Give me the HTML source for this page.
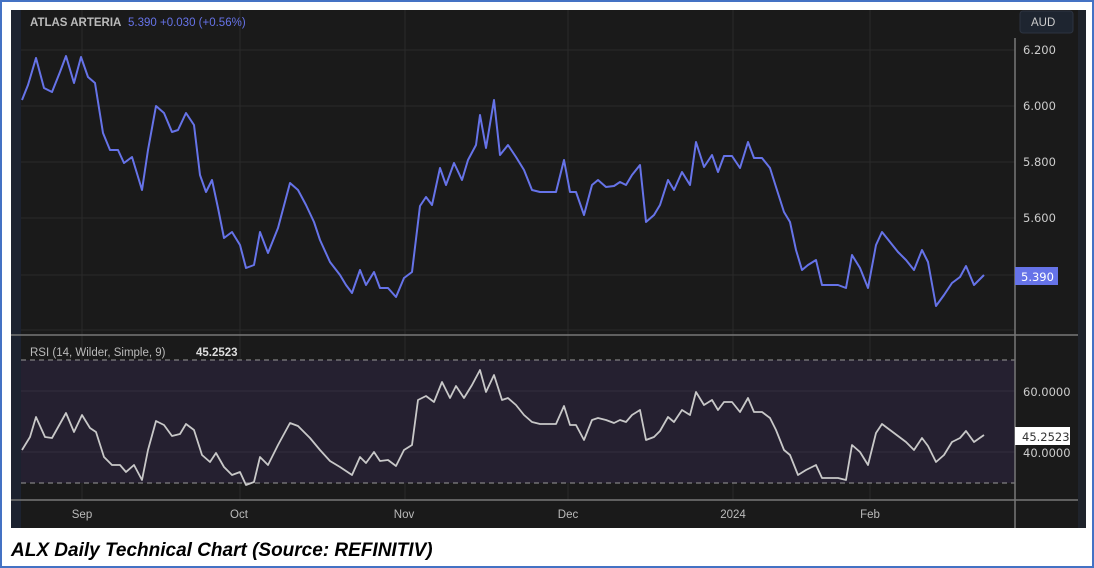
<!DOCTYPE html>
<html><head><style>
body{margin:0;width:1094px;height:568px;background:#fff;overflow:hidden;font-family:"Liberation Sans",sans-serif}
.frame{position:absolute;left:0;top:0;width:1090px;height:564px;border:2px solid #4472c4}
</style></head><body>
<div class="frame"></div>
<svg width="1094" height="568" style="position:absolute;left:0;top:0" font-family="Liberation Sans, sans-serif">
<rect x="11" y="10" width="1075" height="518" fill="#1a1a1a"/>
<rect x="11" y="10" width="10" height="518" fill="#1c2230"/>
<rect x="1078" y="10" width="8" height="518" fill="#1f232b"/>
<g stroke="#2a2a2a" stroke-width="1">
<line x1="21" y1="50" x2="1015" y2="50"/><line x1="21" y1="106" x2="1015" y2="106"/><line x1="21" y1="162" x2="1015" y2="162"/><line x1="21" y1="218" x2="1015" y2="218"/><line x1="21" y1="275" x2="1015" y2="275"/><line x1="21" y1="330" x2="1015" y2="330"/>
<line x1="82" y1="10" x2="82" y2="500"/><line x1="240" y1="10" x2="240" y2="500"/><line x1="405" y1="10" x2="405" y2="500"/><line x1="568" y1="10" x2="568" y2="500"/><line x1="733" y1="10" x2="733" y2="500"/><line x1="870" y1="10" x2="870" y2="500"/>
</g>
<rect x="21" y="360" width="994" height="123" fill="#252030"/>
<g stroke="#332e3e"><line x1="21" y1="391" x2="1015" y2="391"/><line x1="21" y1="452" x2="1015" y2="452"/></g>
<g stroke="#999" stroke-dasharray="5,4"><line x1="21" y1="360" x2="1015" y2="360"/><line x1="21" y1="483" x2="1015" y2="483"/></g>
<line x1="11" y1="335" x2="1078" y2="335" stroke="#777" stroke-width="1.5"/>
<line x1="11" y1="500" x2="1078" y2="500" stroke="#777" stroke-width="1.5"/>
<line x1="1015" y1="38" x2="1015" y2="528" stroke="#777" stroke-width="1.5"/>
<polyline fill="none" stroke="#6673e8" stroke-width="2" stroke-linejoin="round" points="22,100 28,85 36,58 44,88 52,92 60,72 66,56 74,83 81,57 88,77 95,83 103,133 110,150 118,150 124,163 132,157 142,190 148,150 156,106 164,113 172,132 178,130 186,113 194,125 200,175 206,192 212,180 218,208 224,238 232,232 240,245 246,268 254,265 260,232 268,253 278,228 290,183 298,190 306,205 314,222 320,240 330,262 340,275 346,285 352,293 360,270 366,285 374,272 380,288 388,288 396,297 404,278 412,272 420,206 426,197 432,205 440,168 446,185 454,163 462,180 468,160 476,145 480,115 486,148 494,100 500,155 508,145 516,157 524,170 532,190 540,192 548,192 556,192 564,160 570,192 576,192 584,215 592,185 598,180 606,187 614,186 620,182 626,185 632,175 640,165 646,222 654,215 660,205 668,180 674,190 682,172 690,185 696,142 704,167 712,155 718,172 724,156 732,156 740,168 748,142 754,158 762,158 770,168 776,187 784,212 790,222 796,250 802,270 808,265 816,260 822,285 830,285 838,285 846,288 852,255 860,268 868,288 876,245 882,232 890,242 898,252 906,260 914,270 922,250 928,262 936,306 944,295 952,283 960,277 966,266 974,285 984,275"/>
<polyline fill="none" stroke="#c8c8c8" stroke-width="1.8" stroke-linejoin="round" points="22,450 30,437 36,417 45,437 52,438 66,413 74,432 82,415 90,428 96,432 104,457 112,465 120,465 126,472 134,465 142,480 148,450 156,421 164,425 172,436 180,434 186,424 194,430 202,455 210,462 216,453 224,467 232,475 240,472 246,485 254,482 260,457 268,465 278,445 290,423 298,426 310,438 320,450 330,461 340,467 352,475 360,457 366,463 374,452 380,461 388,460 396,466 404,450 412,445 418,400 426,396 434,402 442,382 450,398 456,386 464,398 472,385 480,370 486,392 494,375 502,400 508,398 516,405 524,415 532,422 540,424 548,424 556,424 564,406 570,425 576,425 584,440 592,420 598,418 606,420 614,423 620,420 626,422 632,415 640,410 646,440 654,437 660,431 668,417 674,422 682,410 690,415 696,392 704,405 712,400 718,410 724,402 732,402 740,412 748,398 754,412 762,412 770,418 776,430 784,450 790,455 798,475 806,470 816,465 822,478 830,478 838,478 846,480 852,445 860,452 868,465 876,433 882,424 890,430 898,436 906,442 914,450 922,438 928,446 936,462 944,455 952,442 960,438 966,431 974,442 984,435"/>
<text x="30" y="26" font-size="11.5" fill="#bbb" font-weight="bold">ATLAS ARTERIA</text>
<text x="128" y="26" font-size="11.5" fill="#6673e8">5.390  +0.030 (+0.56%)</text>
<rect x="1020" y="11" width="53" height="22" rx="3" fill="#1e2530" stroke="#2c3340"/>
<text x="1031" y="26" font-size="11.5" fill="#ccc">AUD</text>
<g font-size="11.5" fill="#ccc" font-family="DejaVu Sans, sans-serif">
<text x="1023" y="54">6.200</text><text x="1023" y="110">6.000</text><text x="1023" y="166">5.800</text><text x="1023" y="222">5.600</text>
<text x="1023" y="396">60.0000</text><text x="1023" y="457">40.0000</text>
</g>
<rect x="1015" y="267" width="43" height="18" fill="#6673e8"/>
<text x="1021" y="281" font-size="11.5" fill="#fff" font-family="DejaVu Sans, sans-serif">5.390</text>
<rect x="1015" y="427" width="55" height="18" fill="#fff"/>
<text x="1022" y="441" font-size="11.5" fill="#333" font-family="DejaVu Sans, sans-serif">45.2523</text>
<text x="30" y="356" font-size="11.5" fill="#bbb">RSI (14, Wilder, Simple, 9)</text>
<text x="196" y="356" font-size="11.5" fill="#ddd" font-weight="bold">45.2523</text>
<g font-size="11.5" fill="#bbb" text-anchor="middle">
<text x="82" y="518">Sep</text><text x="239" y="518">Oct</text><text x="404" y="518">Nov</text><text x="568" y="518">Dec</text><text x="733" y="518">2024</text><text x="870" y="518">Feb</text>
</g>
<text x="11" y="556" font-size="19" font-weight="bold" font-style="italic" fill="#000">ALX Daily Technical Chart (Source: REFINITIV)</text>
</svg>
</body></html>
